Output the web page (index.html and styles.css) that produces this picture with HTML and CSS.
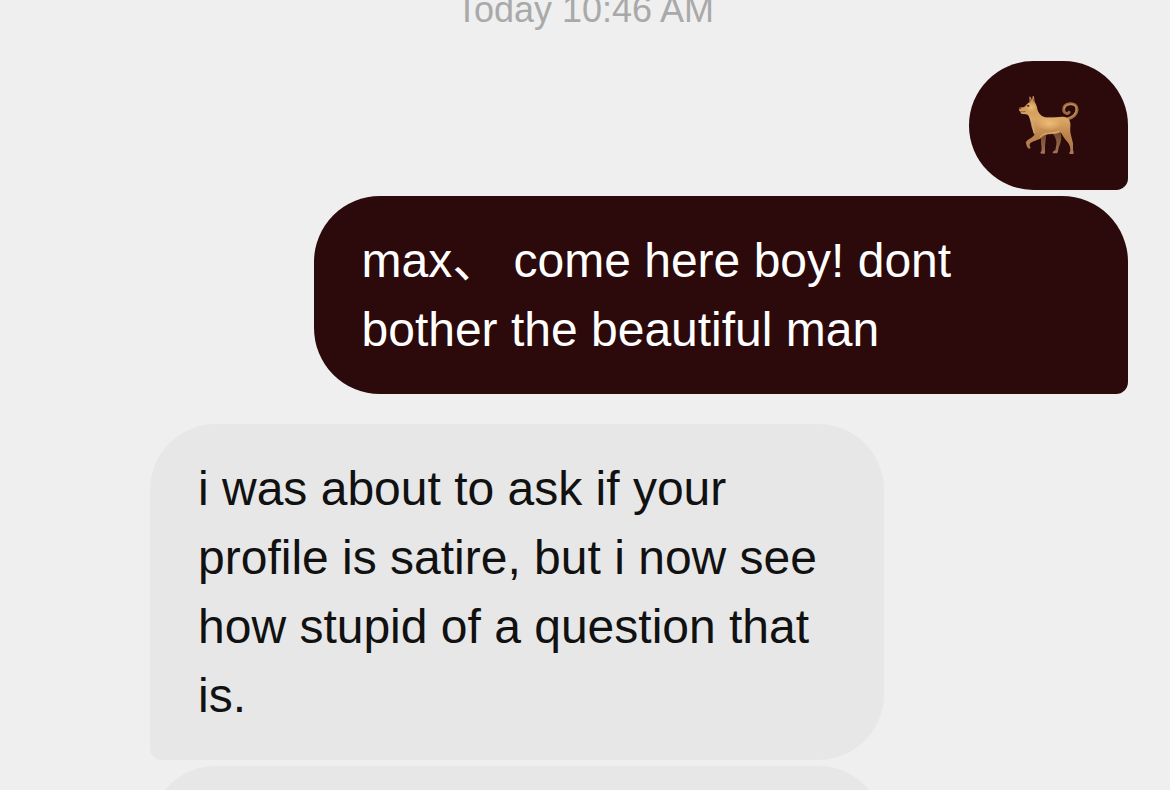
FILE: index.html
```html
<!DOCTYPE html>
<html lang="en">
  <head>
    <meta charset="UTF-8" />
    <meta name="viewport" content="width=device-width, initial-scale=1.0" />
    <title>Messages</title>
    <link rel="stylesheet" href="styles.css">
  </head>
  <body>
    <main class="chat">
      <time class="timestamp">Today 10:46 AM</time>

      <div class="group sent">
        <div class="bubble emoji-bubble">
          <svg class="emoji" viewBox="51 42 189 189" role="img" aria-label="dog">
            <defs>
              <linearGradient id="coat" x1="0" y1="0" x2="0" y2="1">
                <stop offset="0" stop-color="#c98f50" />
                <stop offset="0.4" stop-color="#dba765" />
                <stop offset="0.7" stop-color="#ba824b" />
                <stop offset="1" stop-color="#aa7652" />
              </linearGradient>
              <linearGradient id="far" x1="0" y1="0" x2="0" y2="1">
                <stop offset="0" stop-color="#70452b" />
                <stop offset="1" stop-color="#a27555" />
              </linearGradient>
              <radialGradient id="shine">
                <stop offset="0" stop-color="#edbc75" />
                <stop offset="1" stop-color="#edbc75" stop-opacity="0" />
              </radialGradient>
            </defs>
            <!-- tail -->
            <path d="M202 117 C218 114 231 103 231 88 C231 76 222 70 210 71 C197 72 189 81 191 91 C193 101 204 103 207 97" fill="none" stroke="#9c6a42" stroke-width="9" stroke-linecap="round" />
            <path d="M203 115 C217 112 229 101 229 88 C229 77 221 72 210 73 C200 74 193 80 193 87" fill="none" stroke="#c08a54" stroke-width="4" stroke-linecap="round" />
            <!-- far legs -->
            <path d="M123 161 L123 188 C124 199 126 207 124 214 C120 216 120 221 125 221 L134 221 C137 215 134 207 135 198 L139 162 Z" fill="url(#far)" />
            <path d="M157 160 C165 170 171 182 169 193 L166 211 C160 213 156 217 159 220 L171 220 C175 216 174 209 177 200 C180 192 184 184 184 170 L182 156 Z" fill="url(#far)" />
            <!-- body, head and near legs -->
            <path d="M89 67 L88 51 Q89 47 93 53 L96 61 L98 49 Q99 45 102 50 L104 66 C108 72 111 78 112 87 C114 98 121 107 133 111 C150 116 170 109 190 110 C204 111 210 119 211 130 C212 142 209 151 212 162 L219 190 L219 210 Q223 220 219 222 L209 222 Q206 219 211 213 C212 201 208 191 198 181 C190 173 187 162 181 157 C170 165 154 161 139 164 C129 166 126 174 119 177 L98 185 C91 188 88 190 89 198 C93 202 91 207 87 206 C81 204 80 197 78 190 C76 183 86 179 97 171 L104 164 C98 154 98 139 94 126 C90 115 86 103 78 103 L66 102 Q60 99 62 96 Q55 93 58 85 Q61 81 70 82 C77 81 79 71 89 67 Z" fill="url(#coat)" />
            <ellipse cx="148" cy="130" rx="38" ry="22" fill="url(#shine)" />
            <ellipse cx="94" cy="82" rx="17" ry="16" fill="url(#shine)" />
            <!-- pale chest and belly -->
            <path d="M86 106 C91 119 92 137 98 151 C99 158 102 163 104 164 C105 148 96 130 94 116 Z" fill="#e0b98a" opacity="0.7" />
            <path d="M120 172 C128 156 151 163 178 154" fill="none" stroke="#e6c18e" stroke-width="3" opacity="0.7" />
            <!-- ears and face -->
            <path d="M90 65 L89 52 L94 62 Z M99 63 L100 51 L103 66 Z" fill="#8f5543" />
            <path d="M80 77 Q85 73 89 77 Q86 82 81 79 Z" fill="#3a2018" />
            <ellipse cx="60" cy="85" rx="4" ry="3" fill="#71483b" />
            <path d="M62 95 Q69 97 76 94" fill="none" stroke="#5d3323" stroke-width="2" />
            <path d="M62 97 L76 98 L72 102 L65 101 Z" fill="#c49a83" />
          </svg>
        </div>
        <div class="bubble">max、 come here boy! dont bother the beautiful man</div>
      </div>

      <div class="group received">
        <div class="bubble">i was about to ask if your profile is satire, but i now see how stupid of a question that is.</div>
        <div class="bubble next"></div>
      </div>
    </main>
  </body>
</html>
```
FILE: styles.css
```css
* {
  box-sizing: border-box;
}

body {
  margin: 0;
  height: 100vh;
  overflow: hidden;
  background-color: #efefef;
  font-family: "Liberation Sans", "Noto Sans CJK SC", sans-serif;
  font-size: 48px;
  line-height: 69px;
}

.chat {
  display: flex;
  flex-direction: column;
  gap: 30px;
  margin-top: -11px;
  padding: 0 42px;
}

.timestamp {
  color: #a9a9a9;
  font-size: 36px;
  line-height: 42px;
  text-align: center;
}

.group {
  display: flex;
  flex-direction: column;
  gap: 6px;
}

.sent {
  align-items: flex-end;
}

.received {
  align-items: flex-start;
  padding-left: 108px;
}

.bubble {
  max-width: 75%;
  padding: 30px 48px;
  border-radius: 66px;
}

.sent .bubble {
  background-color: #2c090a;
  color: #fff;
  border-bottom-right-radius: 12px;
}

.received .bubble {
  background-color: #e7e7e7;
  color: #111;
  border-bottom-left-radius: 12px;
}

.emoji-bubble {
  display: flex;
  align-items: center;
  min-height: 129px;
}

.emoji {
  width: 63px;
  height: 63px;
}

/* next message, cut off by the bottom of the window */
.received .next {
  width: 75%;
  min-height: 198px;
}
```
